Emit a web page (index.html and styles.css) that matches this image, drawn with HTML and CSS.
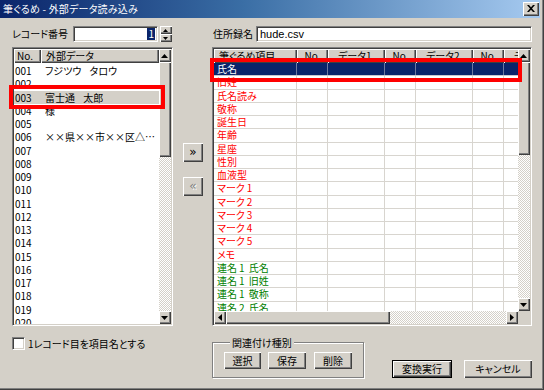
FILE: index.html
```html
<!DOCTYPE html>
<html lang="ja">
<head>
<meta charset="utf-8">
<title>筆ぐるめ - 外部データ読み込み</title>
<link rel="stylesheet" href="styles.css">
</head>
<body>
<div class="window">
  <div class="titlebar">
    <span class="title">筆ぐるめ - 外部データ読み込み</span>
    <span class="close raised"><svg width="8" height="7" viewBox="0 0 8 7"><path d="M0 0h2l2 2.3L6 0h2L5 3.5 8 7H6L4 4.7 2 7H0l3-3.5z" fill="#000"/></svg></span>
  </div>

  <div class="client">
    <div class="top-left">
      <span class="lbl lbl-rec">レコード番号</span>
      <div class="field rec"><span class="sel-text">1</span></div>
      <div class="spin">
        <span class="spin-btn raised"><svg width="5" height="3" viewBox="0 0 5 3"><path d="M0 3L2.5 0 5 3z" fill="#000"/></svg></span>
        <span class="spin-btn raised"><svg width="5" height="3" viewBox="0 0 5 3"><path d="M0 0h5L2.5 3z" fill="#000"/></svg></span>
      </div>
    </div>
    <div class="top-mid"></div>
    <div class="top-right">
      <span class="lbl lbl-file">住所録名</span>
      <div class="field file">hude.csv</div>
    </div>

    <div class="listbox sunken">
      <div class="list-main">
        <div class="lhead">
          <span class="hcell lh-no">No.</span>
          <span class="hcell lh-data">外部データ</span>
        </div>
        <div class="lbody">
          <div class="lrow"><span class="c-no">001</span><span class="c-data">フジツウ タロウ</span></div>
          <div class="lrow"><span class="c-no">002</span><span class="c-data"></span></div>
          <div class="lrow lsel"><span class="c-no">003</span><span class="c-data">富士通 太郎</span></div>
          <div class="lrow"><span class="c-no">004</span><span class="c-data">様</span></div>
          <div class="lrow"><span class="c-no">005</span><span class="c-data"></span></div>
          <div class="lrow"><span class="c-no">006</span><span class="c-data addr">××県××市××区△…</span></div>
          <div class="lrow"><span class="c-no">007</span></div>
          <div class="lrow"><span class="c-no">008</span></div>
          <div class="lrow"><span class="c-no">009</span></div>
          <div class="lrow"><span class="c-no">010</span></div>
          <div class="lrow"><span class="c-no">011</span></div>
          <div class="lrow"><span class="c-no">012</span></div>
          <div class="lrow"><span class="c-no">013</span></div>
          <div class="lrow"><span class="c-no">014</span></div>
          <div class="lrow"><span class="c-no">015</span></div>
          <div class="lrow"><span class="c-no">016</span></div>
          <div class="lrow"><span class="c-no">017</span></div>
          <div class="lrow"><span class="c-no">018</span></div>
          <div class="lrow"><span class="c-no">019</span></div>
          <div class="lrow"><span class="c-no">020</span></div>
        </div>
      </div>
      <div class="vscroll">
        <span class="sb-btn raised"><svg width="7" height="4" viewBox="0 0 7 4"><path d="M0 4L3.5 0 7 4z" fill="#000"/></svg></span>
        <span class="thumb raised lthumb"></span>
        <span class="track"></span>
        <span class="sb-btn raised"><svg width="7" height="4" viewBox="0 0 7 4"><path d="M0 0h7L3.5 4z" fill="#000"/></svg></span>
      </div>
    </div>

    <div class="movers">
      <span class="mv-btn raised">»</span>
      <span class="mv-btn raised disabled">«</span>
    </div>

    <div class="grid sunken">
      <div class="grid-main">
        <div class="ghead">
          <span class="hcell g1">筆ぐるめ項目</span>
          <span class="hcell g2 ctr">No.</span>
          <span class="hcell g3">データ1</span>
          <span class="hcell g2 ctr">No.</span>
          <span class="hcell g3">データ2</span>
          <span class="hcell g2 ctr">No.</span>
          <span class="hcell g3">データ3</span>
        </div>
        <div class="gbody">
          <div class="grow gsel"><span class="gc g1">氏名</span><span class="gc g2"></span><span class="gc g3"></span><span class="gc g2"></span><span class="gc g3"></span><span class="gc g2"></span><span class="gc g3"></span></div>
          <div class="grow red"><span class="gc g1">旧姓</span><span class="gc g2"></span><span class="gc g3"></span><span class="gc g2"></span><span class="gc g3"></span><span class="gc g2"></span><span class="gc g3"></span></div>
          <div class="grow red"><span class="gc g1">氏名読み</span><span class="gc g2"></span><span class="gc g3"></span><span class="gc g2"></span><span class="gc g3"></span><span class="gc g2"></span><span class="gc g3"></span></div>
          <div class="grow red"><span class="gc g1">敬称</span><span class="gc g2"></span><span class="gc g3"></span><span class="gc g2"></span><span class="gc g3"></span><span class="gc g2"></span><span class="gc g3"></span></div>
          <div class="grow red"><span class="gc g1">誕生日</span><span class="gc g2"></span><span class="gc g3"></span><span class="gc g2"></span><span class="gc g3"></span><span class="gc g2"></span><span class="gc g3"></span></div>
          <div class="grow red"><span class="gc g1">年齢</span><span class="gc g2"></span><span class="gc g3"></span><span class="gc g2"></span><span class="gc g3"></span><span class="gc g2"></span><span class="gc g3"></span></div>
          <div class="grow red"><span class="gc g1">星座</span><span class="gc g2"></span><span class="gc g3"></span><span class="gc g2"></span><span class="gc g3"></span><span class="gc g2"></span><span class="gc g3"></span></div>
          <div class="grow red"><span class="gc g1">性別</span><span class="gc g2"></span><span class="gc g3"></span><span class="gc g2"></span><span class="gc g3"></span><span class="gc g2"></span><span class="gc g3"></span></div>
          <div class="grow red"><span class="gc g1">血液型</span><span class="gc g2"></span><span class="gc g3"></span><span class="gc g2"></span><span class="gc g3"></span><span class="gc g2"></span><span class="gc g3"></span></div>
          <div class="grow red"><span class="gc g1">マーク<span class="dg">1</span></span><span class="gc g2"></span><span class="gc g3"></span><span class="gc g2"></span><span class="gc g3"></span><span class="gc g2"></span><span class="gc g3"></span></div>
          <div class="grow red"><span class="gc g1">マーク<span class="dg">2</span></span><span class="gc g2"></span><span class="gc g3"></span><span class="gc g2"></span><span class="gc g3"></span><span class="gc g2"></span><span class="gc g3"></span></div>
          <div class="grow red"><span class="gc g1">マーク<span class="dg">3</span></span><span class="gc g2"></span><span class="gc g3"></span><span class="gc g2"></span><span class="gc g3"></span><span class="gc g2"></span><span class="gc g3"></span></div>
          <div class="grow red"><span class="gc g1">マーク<span class="dg">4</span></span><span class="gc g2"></span><span class="gc g3"></span><span class="gc g2"></span><span class="gc g3"></span><span class="gc g2"></span><span class="gc g3"></span></div>
          <div class="grow red"><span class="gc g1">マーク<span class="dg">5</span></span><span class="gc g2"></span><span class="gc g3"></span><span class="gc g2"></span><span class="gc g3"></span><span class="gc g2"></span><span class="gc g3"></span></div>
          <div class="grow red"><span class="gc g1">メモ</span><span class="gc g2"></span><span class="gc g3"></span><span class="gc g2"></span><span class="gc g3"></span><span class="gc g2"></span><span class="gc g3"></span></div>
          <div class="grow green"><span class="gc g1">連名<span class="dg">1</span> 氏名</span><span class="gc g2"></span><span class="gc g3"></span><span class="gc g2"></span><span class="gc g3"></span><span class="gc g2"></span><span class="gc g3"></span></div>
          <div class="grow green"><span class="gc g1">連名<span class="dg">1</span> 旧姓</span><span class="gc g2"></span><span class="gc g3"></span><span class="gc g2"></span><span class="gc g3"></span><span class="gc g2"></span><span class="gc g3"></span></div>
          <div class="grow green"><span class="gc g1">連名<span class="dg">1</span> 敬称</span><span class="gc g2"></span><span class="gc g3"></span><span class="gc g2"></span><span class="gc g3"></span><span class="gc g2"></span><span class="gc g3"></span></div>
          <div class="grow green"><span class="gc g1">連名<span class="dg">2</span> 氏名</span><span class="gc g2"></span><span class="gc g3"></span><span class="gc g2"></span><span class="gc g3"></span><span class="gc g2"></span><span class="gc g3"></span></div>
        </div>
      </div>
      <div class="vscroll">
        <span class="sb-btn raised"><svg width="7" height="4" viewBox="0 0 7 4"><path d="M0 4L3.5 0 7 4z" fill="#000"/></svg></span>
        <span class="thumb raised gthumb"></span>
        <span class="track"></span>
        <span class="sb-btn raised"><svg width="7" height="4" viewBox="0 0 7 4"><path d="M0 0h7L3.5 4z" fill="#000"/></svg></span>
      </div>
      <div class="hscroll">
        <span class="sb-hbtn raised"><svg width="4" height="7" viewBox="0 0 4 7"><path d="M4 0v7L0 3.5z" fill="#000"/></svg></span>
        <span class="hthumb raised"></span>
        <span class="track"></span>
        <span class="sb-hbtn raised"><svg width="4" height="7" viewBox="0 0 4 7"><path d="M0 0v7L4 3.5z" fill="#000"/></svg></span>
      </div>
      <div class="corner"></div>
    </div>

    <div class="bottom-left">
      <span class="checkbox"></span>
      <span class="chk-label">1レコード目を項目名とする</span>
    </div>
    <div class="bottom-mid"></div>
    <div class="bottom-right">
      <fieldset class="group">
        <legend>関連付け種別</legend>
        <div class="group-btns">
          <button class="btn b-sel">選択</button>
          <button class="btn b-save">保存</button>
          <button class="btn b-del">削除</button>
        </div>
      </fieldset>
      <div class="actions">
        <button class="btn btn-default b-run">変換実行</button>
        <button class="btn b-cancel">キャンセル</button>
      </div>
    </div>
  </div>

  <div class="redbox redbox-left"></div>
  <div class="redbox redbox-right"></div>
</div>
</body>
</html>
```

FILE: styles.css
```css
* { box-sizing: border-box; }
html, body { margin: 0; padding: 0; }
body {
  width: 544px;
  height: 390px;
  overflow: hidden;
  background: #d4d0c8;
  font-family: "Noto Sans CJK JP", "Liberation Sans", sans-serif;
  font-size: 10px;
  font-feature-settings: "palt";
  color: #000;
}

.window {
  position: relative;
  width: 544px;
  height: 390px;
  background: #d4d0c8;
  border-right: 1px solid #404040;
  border-bottom: 1px solid #404040;
  box-shadow: inset -1px -1px 0 #808080;
}

/* generic 3D */
.raised {
  background: #d4d0c8;
  box-shadow: inset 1px 1px 0 #fff, inset -1px -1px 0 #404040, inset -2px -2px 0 #808080;
}
.sunken {
  border: 1px solid;
  border-color: #808080 #fff #fff #808080;
  box-shadow: inset 1px 1px 0 #404040, inset -1px -1px 0 #d4d0c8;
  padding: 1px;
}

/* title bar */
.titlebar {
  width: 540px;
  height: 18px;
  display: flex;
  align-items: center;
  padding-left: 3px;
  background: linear-gradient(to right, #0a246a 0%, #3a6ea5 45%, #a6caf0 100%);
  color: #fff;
}
.title { font-size: 10px; line-height: 12px; letter-spacing: 0.2px; }
.close {
  margin-left: auto;
  margin-right: 1px;
  width: 16px;
  height: 14px;
  display: flex;
  align-items: center;
  justify-content: center;
  padding: 0 1px 1px 0;
}

/* client grid */
.client {
  display: grid;
  grid-template-columns: 161px 39px 320px;
  grid-template-rows: 16px 279px 1fr;
  row-gap: 5px;
  padding: 8px 0 0 12px;
  height: 372px;
}

.top-left, .top-right { display: flex; align-items: center; }
.lbl { white-space: nowrap; line-height: 14px; }
.lbl-rec { width: 61px; }
.lbl-file { width: 44px; padding-left: 1px; }

.field {
  height: 16px;
  background: #fff;
  border: 1px solid;
  border-color: #808080 #fff #fff #808080;
  box-shadow: inset 1px 1px 0 #404040, inset -1px -1px 0 #d4d0c8;
  display: flex;
  align-items: center;
}
.rec { width: 85px; margin-right: 2px; justify-content: flex-end; padding-right: 2px; }
.sel-text { background: #0a246a; color: #fff; line-height: 12px; padding: 0 1px; }
.file { flex: 1; padding-left: 3px; font-family: "Liberation Sans", sans-serif; font-size: 11px; }

.spin { width: 12px; height: 16px; display: flex; flex-direction: column; }
.spin-btn { flex: 1; display: flex; align-items: center; justify-content: center; padding-right: 1px; }

/* list box */
.listbox {
  display: grid;
  grid-template-columns: 1fr 12px;
  background: #fff;
  overflow: hidden;
}
.list-main { overflow: hidden; }
.lhead, .ghead { display: flex; height: 14px; }
.hcell {
  flex: none;
  height: 14px;
  line-height: 13px;
  padding-left: 3px;
  white-space: nowrap;
  overflow: hidden;
  background: #d4d0c8;
  box-shadow: inset 1px 1px 0 #fff, inset -1px -1px 0 #404040, inset -2px -2px 0 #808080;
}
.lh-no { width: 27px; }
.lh-data { flex: 1; padding-left: 5px; }

.lbody { padding-top: 1px; }
.lrow { display: flex; height: 13.25px; line-height: 13px; white-space: nowrap; }
.c-no { width: 31px; padding-left: 1px; }
.c-data { overflow: hidden; word-spacing: 6px; }
.c-data.addr { word-spacing: 0; }
.lsel { background: #d4d0c8; }

/* scrollbars */
.vscroll { display: flex; flex-direction: column; }
.sb-btn { flex: none; height: 13px; display: flex; align-items: center; justify-content: center; padding-right: 1px; }
.thumb { flex: none; }
.lthumb { height: 95px; }
.gthumb { height: 93px; }
.track {
  flex: 1;
  background-color: #fff;
  background-image: repeating-conic-gradient(#d4d0c8 0 25%, #fff 0 50%);
  background-size: 2px 2px;
}
.hscroll { display: flex; height: 13px; }
.sb-hbtn { flex: none; width: 12px; display: flex; align-items: center; justify-content: center; padding-bottom: 1px; }
.hthumb { flex: none; width: 164px; }
.corner { background: #d4d0c8; }

/* movers */
.movers {
  display: flex;
  flex-direction: column;
  gap: 15px;
  padding: 96px 0 0 10px;
}
.mv-btn {
  width: 20px;
  height: 19px;
  display: flex;
  align-items: center;
  justify-content: center;
  font-family: "DejaVu Sans", sans-serif;
  font-size: 12px;
  line-height: 1;
  padding-bottom: 2px;
}
.disabled { color: #808080; text-shadow: 1px 1px 0 #fff; }

/* grid */
.grid {
  display: grid;
  grid-template-columns: 1fr 12px;
  grid-template-rows: 1fr 13px;
  background: #fff;
  overflow: hidden;
}
.grid-main { overflow: hidden; }
.ghead, .grow { width: 347px; }
.g1 { width: 83px; }
.g2 { width: 31px; }
.g3 { width: 57px; }
.ghead .g3 { padding-left: 10px; }
.ghead .g1 { padding-left: 5px; }
.ctr { text-align: center; padding-left: 0; }
.grow {
  display: flex;
  height: 13.25px;
  line-height: 12px;
  border-bottom: 1px solid #d8d5cf;
}
.gc { flex: none; height: 100%; border-right: 1px solid #d8d5cf; white-space: nowrap; overflow: hidden; word-spacing: 2px; }
.grow .g1 { padding-left: 3px; }
.dg { padding-left: 2px; }
.gsel { background: #0a246a; color: #fff; border-bottom-color: #c8c8d0; }
.gsel .gc { border-right-color: #6d7aa0; }
.red { color: #f00; }
.green { color: #008000; }

/* bottom */
.bottom-left { display: flex; align-items: center; padding-top: 6px; align-self: start; }
.checkbox {
  width: 13px;
  height: 13px;
  background: #fff;
  border: 1px solid;
  border-color: #808080 #fff #fff #808080;
  box-shadow: inset 1px 1px 0 #404040, inset -1px -1px 0 #d4d0c8;
  margin-right: 3px;
}
.chk-label { line-height: 13px; }

.bottom-right { display: flex; align-items: flex-start; }
.group {
  margin: 5px 0 0 0;
  width: 152px;
  padding: 3px 0 8px 11px;
  border: 1px solid #808080;
  box-shadow: inset 1px 1px 0 #fff, 1px 1px 0 #fff;
}
.group legend {
  margin-left: 6px;
  padding: 0 2px;
  line-height: 13px;
  background: #d4d0c8;
}
.group-btns { display: flex; }

.btn {
  height: 17px;
  border: 0;
  padding: 0;
  margin: 0;
  font: inherit;
  color: #000;
  background: #d4d0c8;
  box-shadow: inset 1px 1px 0 #fff, inset -1px -1px 0 #404040, inset -2px -2px 0 #808080;
  display: flex;
  align-items: center;
  justify-content: center;
  line-height: 12px;
}
.b-sel { width: 37px; }
.b-save { width: 38px; margin-left: 7px; }
.b-del { width: 38px; margin-left: 8px; }

.actions { display: flex; margin: 29px 0 0 28px; gap: 12px; }
.b-run, .b-cancel { height: 18px; }
.b-run { width: 60px; }
.b-cancel { width: 68px; }
.btn-default {
  border: 1px solid #000;
  box-shadow: inset 1px 1px 0 #fff, inset -1px -1px 0 #404040, inset -2px -2px 0 #808080;
}

/* red annotation boxes */
.redbox { position: absolute; border: 4px solid #f00; pointer-events: none; }
.redbox-left { left: 9px; top: 85px; width: 156px; height: 24px; }
.redbox-right { left: 210px; top: 58px; width: 312px; height: 24px; }
```
